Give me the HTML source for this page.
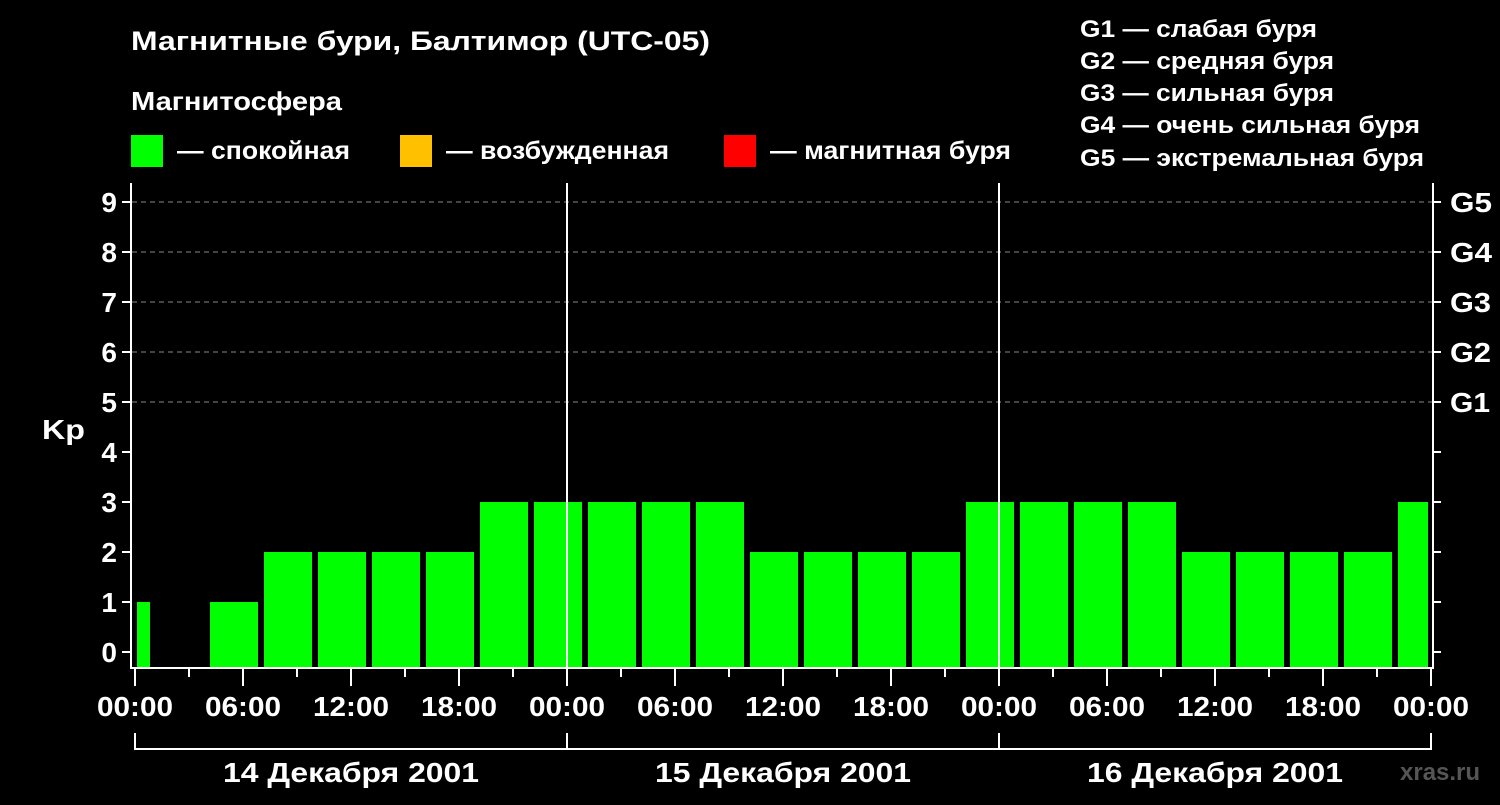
<!DOCTYPE html><html><head><meta charset="utf-8"><style>body{margin:0;background:#000;width:1500px;height:800px;overflow:hidden}</style></head><body>
<svg width="1500" height="800" xmlns="http://www.w3.org/2000/svg" font-family="Liberation Sans, Arial, sans-serif" font-weight="bold" fill="#fff">
<rect width="1500" height="800" fill="#000"/>
<text x="131" y="50" font-size="27" textLength="579" lengthAdjust="spacingAndGlyphs">Магнитные бури, Балтимор (UTC-05)</text>
<text x="131" y="110" font-size="26" textLength="211" lengthAdjust="spacingAndGlyphs">Магнитосфера</text>
<rect x="131" y="135" width="32" height="32" fill="#00ff00"/><text x="177" y="159" font-size="25" textLength="173" lengthAdjust="spacingAndGlyphs">— спокойная</text>
<rect x="400" y="135" width="32" height="32" fill="#ffc000"/><text x="446" y="159" font-size="25" textLength="223" lengthAdjust="spacingAndGlyphs">— возбужденная</text>
<rect x="724" y="135" width="32" height="32" fill="#ff0000"/><text x="770" y="159" font-size="25" textLength="241" lengthAdjust="spacingAndGlyphs">— магнитная буря</text>
<g font-size="24"><text x="1080" y="37" textLength="237" lengthAdjust="spacingAndGlyphs">G1 — слабая буря</text><text x="1080" y="69" textLength="254" lengthAdjust="spacingAndGlyphs">G2 — средняя буря</text><text x="1080" y="101" textLength="254" lengthAdjust="spacingAndGlyphs">G3 — сильная буря</text><text x="1080" y="133" textLength="340" lengthAdjust="spacingAndGlyphs">G4 — очень сильная буря</text><text x="1080" y="166" textLength="344" lengthAdjust="spacingAndGlyphs">G5 — экстремальная буря</text></g>
<g fill="#00ff00">
<rect x="137" y="602" width="13" height="65"/>
<rect x="210" y="602" width="48" height="65"/>
<rect x="264" y="552" width="48" height="115"/><rect x="318" y="552" width="48" height="115"/><rect x="372" y="552" width="48" height="115"/><rect x="426" y="552" width="48" height="115"/>
<rect x="480" y="502" width="48" height="165"/><rect x="534" y="502" width="48" height="165"/><rect x="588" y="502" width="48" height="165"/><rect x="642" y="502" width="48" height="165"/><rect x="696" y="502" width="48" height="165"/>
<rect x="750" y="552" width="48" height="115"/><rect x="804" y="552" width="48" height="115"/><rect x="858" y="552" width="48" height="115"/><rect x="912" y="552" width="48" height="115"/>
<rect x="966" y="502" width="48" height="165"/><rect x="1020" y="502" width="48" height="165"/><rect x="1074" y="502" width="48" height="165"/><rect x="1128" y="502" width="48" height="165"/>
<rect x="1182" y="552" width="48" height="115"/><rect x="1236" y="552" width="48" height="115"/><rect x="1290" y="552" width="48" height="115"/><rect x="1344" y="552" width="48" height="115"/>
<rect x="1398" y="502" width="30" height="165"/>
</g>
<g stroke="#888" stroke-dasharray="5,4" stroke-width="1"><line x1="132" y1="202" x2="1433" y2="202"/><line x1="132" y1="252" x2="1433" y2="252"/><line x1="132" y1="302" x2="1433" y2="302"/><line x1="132" y1="352" x2="1433" y2="352"/><line x1="132" y1="402" x2="1433" y2="402"/></g>
<g stroke="#fff" stroke-width="2" fill="none">
<polyline points="131,183 131,668 1433,668 1433,183"/>
<line x1="567" y1="183" x2="567" y2="668"/><line x1="999" y1="183" x2="999" y2="668"/>
<path d="M122 652H131M122 602H131M122 552H131M122 502H131M122 452H131M122 402H131M122 352H131M122 302H131M122 252H131M122 202H131"/>
<path d="M1433 652H1441M1433 602H1441M1433 552H1441M1433 502H1441M1433 452H1441M1433 402H1441M1433 352H1441M1433 302H1441M1433 252H1441M1433 202H1441"/>
<path d="M135 668V686M243 668V686M351 668V686M459 668V686M567 668V686M675 668V686M783 668V686M891 668V686M999 668V686M1107 668V686M1215 668V686M1323 668V686M1431 668V686"/>
<path d="M189 668V677M297 668V677M405 668V677M513 668V677M621 668V677M729 668V677M837 668V677M945 668V677M1053 668V677M1161 668V677M1269 668V677M1377 668V677"/>
<path d="M135 733V749H1431V733M567 733V749M999 733V749"/>
</g>
<g font-size="28" text-anchor="end"><text x="117" y="662">0</text><text x="117" y="612">1</text><text x="117" y="562">2</text><text x="117" y="512">3</text><text x="117" y="462">4</text><text x="117" y="412">5</text><text x="117" y="362">6</text><text x="117" y="312">7</text><text x="117" y="262">8</text><text x="117" y="212">9</text></g>
<text x="42" y="439" font-size="28" textLength="43" lengthAdjust="spacingAndGlyphs">Kp</text>
<g font-size="28"><text x="1450" y="412" textLength="40" lengthAdjust="spacingAndGlyphs">G1</text><text x="1450" y="362" textLength="41" lengthAdjust="spacingAndGlyphs">G2</text><text x="1450" y="312" textLength="41" lengthAdjust="spacingAndGlyphs">G3</text><text x="1450" y="262" textLength="42" lengthAdjust="spacingAndGlyphs">G4</text><text x="1450" y="212" textLength="42" lengthAdjust="spacingAndGlyphs">G5</text></g>
<g font-size="28" text-anchor="middle"><text x="135" y="716" textLength="76" lengthAdjust="spacingAndGlyphs">00:00</text><text x="243" y="716" textLength="76" lengthAdjust="spacingAndGlyphs">06:00</text><text x="351" y="716" textLength="76" lengthAdjust="spacingAndGlyphs">12:00</text><text x="459" y="716" textLength="76" lengthAdjust="spacingAndGlyphs">18:00</text><text x="567" y="716" textLength="76" lengthAdjust="spacingAndGlyphs">00:00</text><text x="675" y="716" textLength="76" lengthAdjust="spacingAndGlyphs">06:00</text><text x="783" y="716" textLength="76" lengthAdjust="spacingAndGlyphs">12:00</text><text x="891" y="716" textLength="76" lengthAdjust="spacingAndGlyphs">18:00</text><text x="999" y="716" textLength="76" lengthAdjust="spacingAndGlyphs">00:00</text><text x="1107" y="716" textLength="76" lengthAdjust="spacingAndGlyphs">06:00</text><text x="1215" y="716" textLength="76" lengthAdjust="spacingAndGlyphs">12:00</text><text x="1323" y="716" textLength="76" lengthAdjust="spacingAndGlyphs">18:00</text><text x="1431" y="716" textLength="76" lengthAdjust="spacingAndGlyphs">00:00</text>
<text x="351" y="782" textLength="256" lengthAdjust="spacingAndGlyphs">14 Декабря 2001</text><text x="783" y="782" textLength="256" lengthAdjust="spacingAndGlyphs">15 Декабря 2001</text><text x="1215" y="782" textLength="256" lengthAdjust="spacingAndGlyphs">16 Декабря 2001</text></g>
<text x="1400" y="780" font-size="24" fill="#555">xras.ru</text>
</svg></body></html>
